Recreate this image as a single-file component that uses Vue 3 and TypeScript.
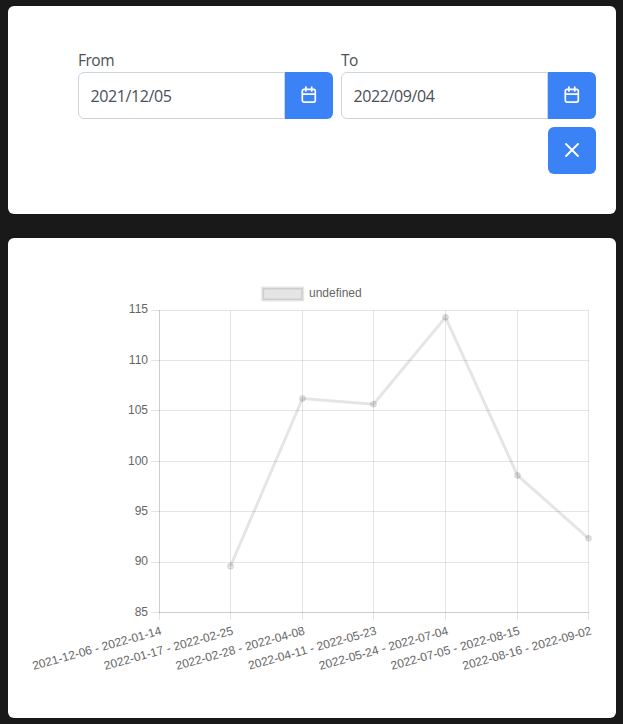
<script setup lang="ts">
import { ref } from 'vue'

const fromDate = ref('2021/12/05')
const toDate = ref('2022/09/04')

function clearDates(): void {
  fromDate.value = ''
  toDate.value = ''
}

interface Period {
  label: string
  x: number
  y: number | null
}

interface Tick {
  value: number
  y: number
  baseline: number
}

const periods: Period[] = [
  { label: '2021-12-06 - 2022-01-14', x: 151.5, y: null },
  { label: '2022-01-17 - 2022-02-25', x: 222.5, y: 328.2 },
  { label: '2022-02-28 - 2022-04-08', x: 294.5, y: 160.5 },
  { label: '2022-04-11 - 2022-05-23', x: 365.5, y: 166.2 },
  { label: '2022-05-24 - 2022-07-04', x: 437.5, y: 79.3 },
  { label: '2022-07-05 - 2022-08-15', x: 509.5, y: 237.4 },
  { label: '2022-08-16 - 2022-09-02', x: 580.5, y: 300.3 },
]

const ticks: Tick[] = [
  { value: 115, y: 72.5, baseline: 75 },
  { value: 110, y: 122.5, baseline: 126 },
  { value: 105, y: 172.5, baseline: 176 },
  { value: 100, y: 223.5, baseline: 227 },
  { value: 95, y: 273.5, baseline: 277 },
  { value: 90, y: 324.5, baseline: 327 },
  { value: 85, y: 374.5, baseline: 378 },
]

const points = periods.filter((p) => p.y !== null)
const line = points.map((p) => `${p.x},${p.y}`).join(' ')
</script>

<template>
  <main class="page">
    <section class="card filters">
      <div class="fields">
        <label v-for="field in ['From', 'To']" :key="field" class="field">
          <span class="caption">{{ field }}</span>
          <span class="group">
            <input v-if="field === 'From'" v-model="fromDate" class="date" type="text" />
            <input v-else v-model="toDate" class="date" type="text" />
            <button class="button attached" type="button" :aria-label="field">
              <svg class="icon" viewBox="0 0 16 18">
                <rect x="1.3" y="3.3" width="13" height="12.8" rx="1.8" />
                <path d="M1.5 8.1H14.1M4.9 1V4.9M10.7 1V4.9" />
              </svg>
            </button>
          </span>
        </label>
      </div>
      <button class="button clear" type="button" aria-label="Clear" @click="clearDates">
        <svg class="cross" viewBox="0 0 16 16">
          <path d="M2 2L14 14M14 2L2 14" />
        </svg>
      </button>
    </section>

    <section class="card">
      <svg class="chart" viewBox="0 0 608 480">
        <rect class="swatch" x="254.7" y="50" width="40" height="12" />
        <text class="tick" x="301" y="59">undefined</text>

        <g class="grid">
          <line v-for="p in periods" :key="p.label" :x1="p.x" :x2="p.x" y1="72" y2="382" />
          <line v-for="t in ticks" :key="t.value" x1="143" x2="581" :y1="t.y" :y2="t.y" />
          <line x1="151.5" x2="151.5" y1="72" y2="375" />
          <line x1="151" x2="581" y1="374.5" y2="374.5" />
        </g>

        <text v-for="t in ticks" :key="t.value" class="tick end" x="140" :y="t.baseline">
          {{ t.value }}
        </text>
        <text
          v-for="(p, i) in periods"
          :key="p.label"
          class="tick end"
          :transform="`translate(${154.2 + i * 71.67} 396.2) rotate(-15.6)`"
        >
          {{ p.label }}
        </text>

        <polyline class="series" :points="line" />
        <circle v-for="p in points" :key="p.label" class="point" :cx="p.x" :cy="p.y ?? 0" r="3" />
      </svg>
    </section>
  </main>
</template>

<style>
body {
  background: #191919;
}
</style>

<style scoped>
.page {
  box-sizing: border-box;
  display: flex;
  flex-direction: column;
  gap: 24px;
  width: 623px;
  height: 724px;
  padding: 6px 7px 6px 8px;
  background: #191919;
  font-family: 'Open Sans', 'Noto Sans', sans-serif;
  color: #495057;
}

.card {
  overflow: hidden;
  border-radius: 6px;
  background: #fff;
}

.filters {
  box-sizing: border-box;
  display: flex;
  flex-direction: column;
  align-items: flex-end;
  gap: 8px;
  height: 208px;
  padding: 42px 20px 40px;
}

.fields {
  display: flex;
  gap: 8px;
}

.field {
  display: flex;
  flex-direction: column;
  width: 255px;
}

.caption {
  height: 24px;
  font-size: 15.5px;
  line-height: 24px;
  letter-spacing: -0.5px;
}

.group {
  display: flex;
  height: 47px;
}

.date {
  box-sizing: border-box;
  flex: 1;
  min-width: 0;
  height: 47px;
  padding: 1px 11.5px 0;
  border: 1px solid #ced4da;
  border-radius: 6px 0 0 6px;
  outline: none;
  background: #fff;
  color: #495057;
  font: 16px 'Open Sans', 'Noto Sans', sans-serif;
  letter-spacing: -0.4px;
}

.button {
  display: flex;
  align-items: center;
  justify-content: center;
  width: 48px;
  height: 47px;
  padding: 0 1px 1px 0;
  border: 0;
  border-radius: 6px;
  background: #3b82f6;
}

.attached {
  border-radius: 0 6px 6px 0;
}

.icon,
.cross {
  fill: none;
  stroke: #fff;
  stroke-linecap: round;
}

.icon {
  width: 16px;
  height: 18px;
  stroke-width: 1.7;
}

.cross {
  width: 16px;
  height: 16px;
  stroke-width: 1.9;
}

.chart {
  display: block;
  width: 608px;
  height: 480px;
}

.grid line {
  stroke: rgba(0, 0, 0, 0.1);
  stroke-width: 1;
}

.tick {
  fill: #666;
  font: 12px 'Liberation Sans', Arial, sans-serif;
}

.end {
  text-anchor: end;
}

.swatch,
.point {
  fill: rgba(0, 0, 0, 0.1);
  stroke: rgba(0, 0, 0, 0.1);
}

.swatch {
  stroke-width: 3;
}

.point {
  stroke-width: 1;
}

.series {
  fill: none;
  stroke: rgba(0, 0, 0, 0.1);
  stroke-width: 3;
}
</style>
